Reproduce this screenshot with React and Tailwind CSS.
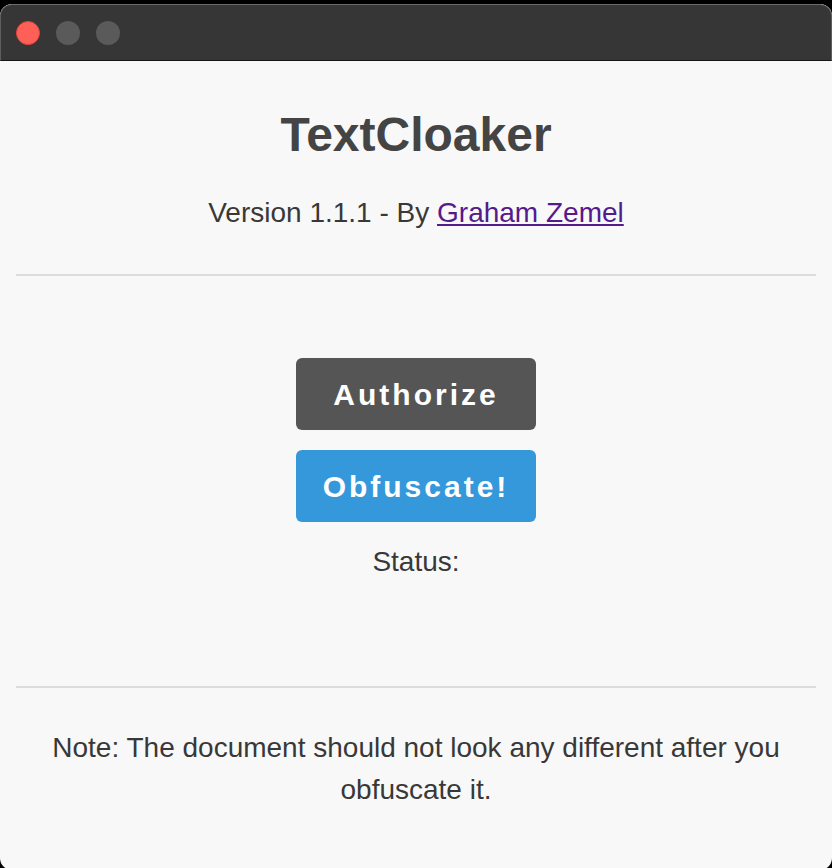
export default function App() {
  const font = { fontFamily: '"Liberation Sans", Arial, sans-serif' };
  return (
    <div className="h-[868px] w-[832px] overflow-hidden bg-black pt-[4px]" style={font}>
      <div className="flex h-[866px] flex-col overflow-hidden rounded-[12px] bg-[#f8f8f8]">
        <div className="flex h-[57px] shrink-0 items-center gap-[16px] rounded-t-[12px] border-x border-t border-b border-x-[#5e5e5e] border-t-[#6a6a6a] border-b-[#151515] bg-[#363636] pl-[15px]">
          <div className="h-[24px] w-[24px] rounded-full border border-[#e0443e] bg-[#fe5f57]" />
          <div className="h-[24px] w-[24px] rounded-full bg-[#5a5a5a]" />
          <div className="h-[24px] w-[24px] rounded-full bg-[#5a5a5a]" />
        </div>
        <div className="flex flex-col items-center pt-[46px]">
          <h1 className="h-[56px] text-[48px] font-bold leading-[56px] text-[#444]">TextCloaker</h1>
          <p className="mt-[34px] h-[32px] text-[28px] leading-[32px] text-[#383838]">
            Version 1.1.1 - By{" "}
            <a href="#" className="text-[#551a8b] underline">Graham Zemel</a>
          </p>
          <div className="mt-[45px] h-[2px] w-[800px] bg-[#dcdcdc]" />
          <button className="mt-[82px] h-[72px] w-[240px] rounded-[6px] bg-[#555555] text-[30px] font-bold tracking-[3px] text-white">
            Authorize
          </button>
          <button className="mt-[20px] h-[72px] w-[240px] rounded-[6px] bg-[#3498db] text-[30px] font-bold tracking-[3px] text-white">
            Obfuscate!
          </button>
          <p className="mt-[24px] h-[32px] text-[28px] leading-[32px] text-[#383838]">Status:</p>
          <div className="mt-[108px] h-[2px] w-[800px] bg-[#dcdcdc]" />
          <p className="mt-[39px] px-[24px] text-center text-[28px] leading-[42px] text-[#383838]">
            Note: The document should not look any different after you obfuscate it.
          </p>
        </div>
      </div>
    </div>
  );
}
